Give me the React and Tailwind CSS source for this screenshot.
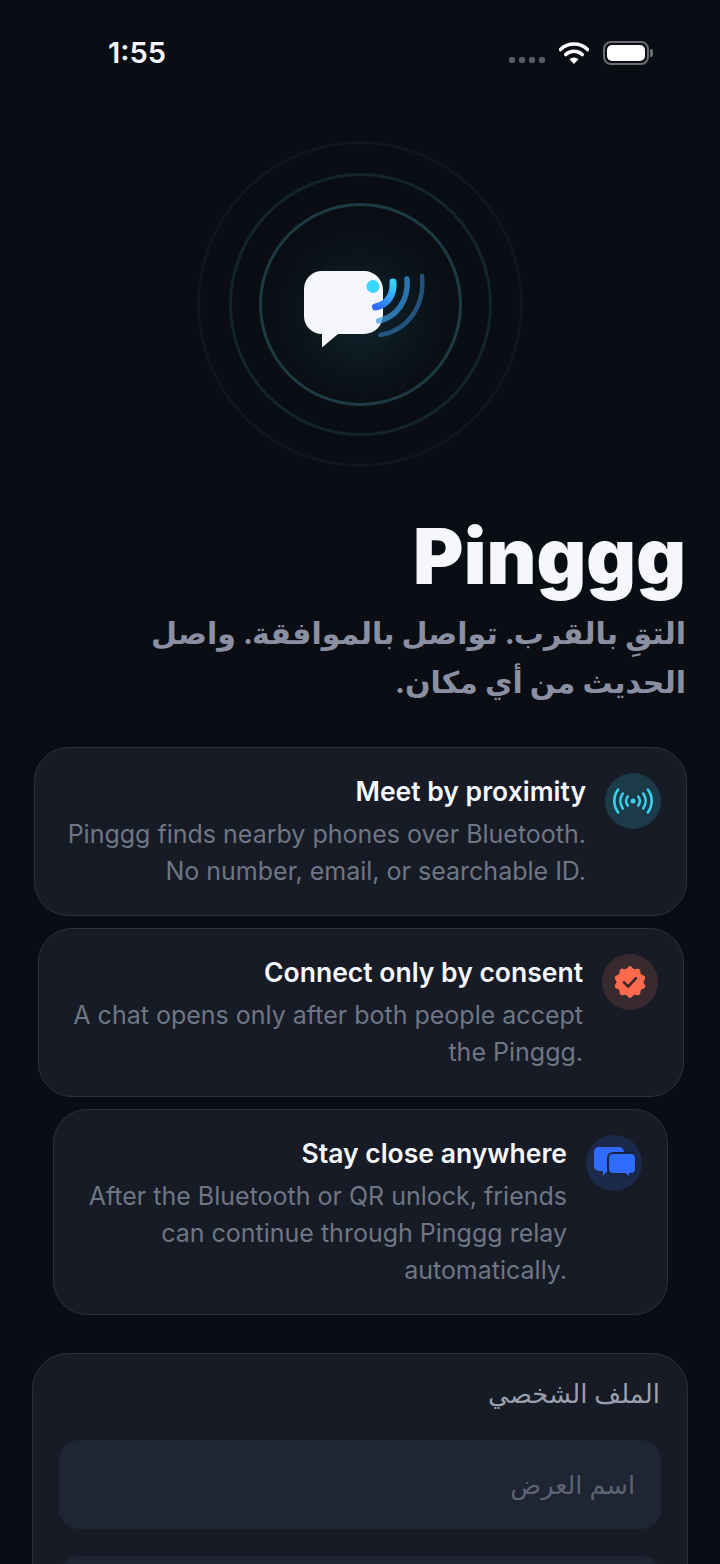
import React from 'react';

const features = [
  {
    title: 'Meet by proximity',
    body: 'Pinggg finds nearby phones over Bluetooth. No number, email, or searchable ID.',
    wrap: 'ml-[34px] mr-[33px] mt-[40px]',
    badge: 'bg-[#1c3a47]',
    icon: <BroadcastIcon />,
  },
  {
    title: 'Connect only by consent',
    body: 'A chat opens only after both people accept the Pinggg.',
    wrap: 'ml-[38px] mr-[36px] mt-[12px]',
    badge: 'bg-[#392a2f]',
    icon: <ConsentIcon />,
  },
  {
    title: 'Stay close anywhere',
    body: 'After the Bluetooth or QR unlock, friends can continue through Pinggg relay automatically.',
    wrap: 'ml-[53px] mr-[52px] mt-[12px]',
    badge: 'bg-[#1b2a4a]',
    icon: <ChatsIcon />,
  },
];

// scalloped seal outline, 10 lobes
const sealPoints = Array.from({ length: 120 }, (_, i) => {
  const a = (i / 120) * Math.PI * 2;
  const r = 14.7 + 1.2 * Math.cos(a * 10);
  return `${(20 + r * Math.sin(a)).toFixed(2)},${(20 - r * Math.cos(a)).toFixed(2)}`;
}).join(' ');

function BroadcastIcon() {
  return (
    <svg width="40" height="40" viewBox="0 0 40 40" fill="none" stroke="#35d3ee" strokeWidth="2.6" strokeLinecap="round">
      <circle cx="20" cy="20" r="2.5" fill="#35d3ee" stroke="none" />
      <path d="M14.8 15.5a7 7 0 0 0 0 9" />
      <path d="M25.2 15.5a7 7 0 0 1 0 9" />
      <path d="M9.8 12.5a13 13 0 0 0 0 15" />
      <path d="M30.2 12.5a13 13 0 0 1 0 15" />
      <path d="M5.2 8.500a19 19 0 0 0 0 23" />
      <path d="M34.8 8.500a19 19 0 0 1 0 23" />
    </svg>
  );
}

function ConsentIcon() {
  return (
    <svg width="40" height="40" viewBox="0 0 40 40" fill="none">
      <polygon points={sealPoints} fill="#ff6a4d" />
      <path d="M14 20.4l4.200 4.200 7.800-8.400" stroke="#3a2225" strokeWidth="2.600" strokeLinecap="round" strokeLinejoin="round" />
    </svg>
  );
}

function ChatsIcon() {
  return (
    <svg width="44" height="44" viewBox="0 0 44 44" fill="none">
      <path d="M2 11a5 5 0 0 1 5-5h20a5 5 0 0 1 5 5v14a5 5 0 0 1-5 5H15.500L11 34.500V30H7a5 5 0 0 1-5-5z" fill="#2f6bff" />
      <path d="M21 12h18a5 5 0 0 1 5 5v11a5 5 0 0 1-5 5h-1v4.500L33 33H21a5 5 0 0 1-5-5V17a5 5 0 0 1 5-5z" fill="#2f6bff" stroke="#17233f" strokeWidth="2" />
    </svg>
  );
}

function Logo() {
  return (
    <svg width="150" height="110" viewBox="285 248 150 110" fill="none" strokeLinecap="round">
      <defs>
        <linearGradient id="wave" x1="393" y1="281" x2="376" y2="306" gradientUnits="userSpaceOnUse">
          <stop offset="0" stopColor="#38d5ff" />
          <stop offset="1" stopColor="#2f6bff" />
        </linearGradient>
      </defs>
      <path d="M322 270h42a19 19 0 0 1 19 19v25a19 19 0 0 1-19 19h-26l-16 13.500V333a18 18 0 0 1-18-18v-27a18 18 0 0 1 18-18z" fill="#f5f7fc" />
      <path d="M393 281c1 13-6 23-17.500 25" stroke="url(#wave)" strokeWidth="7" />
      <path d="M407 278c2 21-10 38-28.500 42" stroke="#3a9ce8" strokeOpacity="0.7" strokeWidth="5.500" />
      <path d="M422 275c3 30-14 54-41.500 59" stroke="#3a8fe0" strokeOpacity="0.5" strokeWidth="4.500" />
      <circle cx="373" cy="285.500" r="6.500" fill="#38d5ff" />
    </svg>
  );
}

function StatusBar() {
  return (
    <div className="flex items-center justify-between h-[34px] mt-[36px] pl-[108px] pr-[67px]">
      <span className="text-[29px] font-semibold text-[#f5f7fc] leading-[34px]">1:55</span>
      <div className="flex items-center">
        <div className="flex gap-[4px] mt-[14px] mr-[14px]">
          <span className="w-[6px] h-[6px] rounded-[2px] bg-[#565a63]" />
          <span className="w-[6px] h-[6px] rounded-[2px] bg-[#565a63]" />
          <span className="w-[6px] h-[6px] rounded-[2px] bg-[#565a63]" />
          <span className="w-[6px] h-[6px] rounded-[2px] bg-[#565a63]" />
        </div>
        <svg width="30" height="24" viewBox="0 0 30 24" fill="none" className="mr-[14px]">
          <path d="M1.5 8.500a19.500 19.500 0 0 1 27 0" stroke="#fff" strokeWidth="3.600" strokeLinecap="round" />
          <path d="M6.800 13.500a12 12 0 0 1 16.400 0" stroke="#fff" strokeWidth="3.600" strokeLinecap="round" />
          <path d="M10.500 18.200L15 23l4.500-4.800a6.500 6.500 0 0 0-9 0z" fill="#fff" />
        </svg>
        <div className="flex items-center">
          <div className="w-[46px] h-[24px] rounded-[8px] border-2 border-[#6a6c72] p-[2px]">
            <div className="w-full h-full rounded-[5px] bg-white" />
          </div>
          <span className="w-[3px] h-[8px] rounded-r-[2px] bg-[#6a6c72] ml-[1px]" />
        </div>
      </div>
    </div>
  );
}

function Hero() {
  return (
    <div className="flex justify-center mt-[71px]">
      <div className="w-[326px] h-[326px] rounded-full border-[3px] border-[#0f171d] flex items-center justify-center">
        <div className="w-[263px] h-[263px] rounded-full border-[3px] border-[#13242b] flex items-center justify-center">
          <div className="w-[203px] h-[203px] rounded-full border-[3px] border-[#1c3b45] flex items-center justify-center bg-[radial-gradient(circle_at_50%_55%,#11252e_0%,#0b1319_45%,#0a0d14_70%)]">
            <Logo />
          </div>
        </div>
      </div>
    </div>
  );
}

function FeatureCard({ title, body, wrap, badge, icon }) {
  return (
    <div className={`${wrap} flex flex-row-reverse gap-[19px] rounded-[34px] border border-[#293241] bg-[#161b26] p-[25px]`}>
      <div className={`${badge} w-[56px] h-[56px] shrink-0 rounded-full flex items-center justify-center`}>
        {icon}
      </div>
      <div className="flex-1 text-right">
        <div className="text-[26.5px] leading-[36px] font-semibold text-[#f5f7fc]">{title}</div>
        <p className="mt-[7px] text-[25px] leading-[37px] text-[#6f7684]">{body}</p>
      </div>
    </div>
  );
}

export default function App() {
  return (
    <div className="w-[720px] h-[1564px] overflow-hidden bg-[#0a0d14] font-['Inter','DejaVu_Sans',sans-serif]">
      <StatusBar />
      <Hero />

      <h1 className="mt-[45px] pr-[34px] text-right text-[77px] leading-[88px] font-black text-[#f5f7fc]">Pinggg</h1>
      <p dir="rtl" className="mt-[9px] pr-[34px] pl-[130px] text-[30px] leading-[49px] font-bold text-[#8a90a2]">
        التقِ بالقرب. تواصل بالموافقة. واصل الحديث من أي مكان.
      </p>

      {features.map((f) => (
        <FeatureCard key={f.title} {...f} />
      ))}

      <div dir="rtl" className="mx-[32px] mt-[38px] rounded-[36px] border border-[#293241] bg-[#161b26] px-[26px] pt-[24px]">
        <div className="pr-[1px] text-[26px] leading-[32px] font-medium tracking-[2px] text-[#9a9fae]">الملف الشخصي</div>
        <input
          placeholder="اسم العرض"
          className="mt-[30px] block w-full h-[89px] rounded-[20px] bg-[#1f2533] px-[26px] text-[25.500px] outline-none placeholder:text-[#5d6372]"
        />
        <input
          placeholder="المعرّف"
          className="mt-[27px] block w-full h-[89px] rounded-[20px] bg-[#1f2533] px-[26px] text-[25.500px] outline-none placeholder:text-[#5d6372]"
        />
      </div>
    </div>
  );
}
